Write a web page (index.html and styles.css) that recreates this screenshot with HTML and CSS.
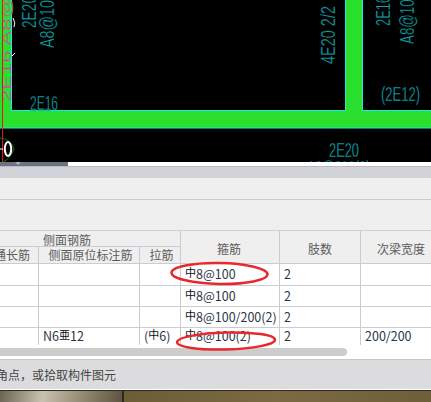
FILE: index.html
```html
<!DOCTYPE html>
<html lang="zh">
<head>
<meta charset="utf-8">
<title>梁平法表格</title>
<link rel="stylesheet" href="styles.css">
</head>
<body>
<div class="app">
  <svg class="cad" viewBox="0 0 431 162" width="431" height="162">
    <rect width="431" height="162" fill="#000"/>
    <rect x="0" y="0" width="11" height="110" fill="#2bdf2f"/>
    <rect x="345" y="0" width="18" height="110" fill="#2bdf2f"/>
    <rect x="0" y="110" width="431" height="18" fill="#2bdf2f"/>
    <path d="M11.5 0V110.5H345.5V0M362.5 0V110.5H431M0 128H431" fill="none" stroke="#1fe9e6" stroke-width="1"/>
    <text class="mag" transform="translate(10.5,102) rotate(-90)" textLength="106" lengthAdjust="spacingAndGlyphs">2E16 A8@</text>
    <path d="M13 18Q16 23 14 27M12 56L15 53" fill="none" stroke="#fff" stroke-width="1"/>
    <rect x="2" y="0" width="1" height="162" fill="#f01010"/>
    <g class="teal">
      <text transform="translate(36,28) rotate(-90)" textLength="32" lengthAdjust="spacingAndGlyphs">2E20</text>
      <text transform="translate(54,48) rotate(-90)" textLength="56" lengthAdjust="spacingAndGlyphs">A8@100</text>
      <text x="30" y="110" textLength="28" lengthAdjust="spacingAndGlyphs">2E16</text>
      <text transform="translate(335,64) rotate(-90)" textLength="58" lengthAdjust="spacingAndGlyphs">4E20 2/2</text>
      <text transform="translate(390,26) rotate(-90)" textLength="30" lengthAdjust="spacingAndGlyphs">2E16</text>
      <text transform="translate(414,44) rotate(-90)" textLength="52" lengthAdjust="spacingAndGlyphs">A8@100</text>
      <text x="381" y="101" textLength="39" lengthAdjust="spacingAndGlyphs">(2E12)</text>
      <text x="329" y="157" textLength="30" lengthAdjust="spacingAndGlyphs">2E20</text>
      <text x="307" y="175" textLength="63" lengthAdjust="spacingAndGlyphs">A8@200(2)</text>
    </g>
    <path d="M0 138Q11 139 14 149Q11 158 3 162" fill="none" stroke="#127a12" stroke-width="1"/>
    <path d="M0 149H3" stroke="#fff" stroke-width="1"/>
    <ellipse cx="8" cy="149" rx="3.2" ry="7" fill="none" stroke="#fff" stroke-width="2"/>
  </svg>

  <div class="hscroll">
    <div class="hthumb"><span class="harrow"></span></div>
  </div>
  <div class="tabbar"></div>
  <div class="toolbar"></div>
  <div class="toolbar2"></div>

  <div class="sheet">
    <div class="grid">
      <div class="hd group">侧面钢筋</div>
      <div class="hd tall c4">箍筋</div>
      <div class="hd tall c5">肢数</div>
      <div class="hd tall c6">次梁宽度</div>
      <div class="hd end">通长筋</div>
      <div class="hd low">侧面原位标注筋</div>
      <div class="hd low">拉筋</div>

      <div class="td"></div><div class="td"></div><div class="td"></div>
      <div class="td"><span class="bar">中</span>8@100</div><div class="td">2</div><div class="td"></div>

      <div class="td"></div><div class="td"></div><div class="td"></div>
      <div class="td"><span class="bar">中</span>8@100</div><div class="td">2</div><div class="td"></div>

      <div class="td"></div><div class="td"></div><div class="td"></div>
      <div class="td"><span class="bar">中</span>8@100/200(2)</div><div class="td">2</div><div class="td"></div>

      <div class="td"></div><div class="td">N6<span class="bar">亜</span>12</div><div class="td">(<span class="bar">中</span>6)</div>
      <div class="td"><span class="bar">中</span>8@100(2)</div><div class="td">2</div><div class="td">200/200</div>
    </div>
    <svg class="marks" viewBox="0 0 431 120" width="431" height="120">
      <ellipse cx="219.5" cy="42.5" rx="48" ry="10.5" transform="rotate(1 219.5 42.5)"/>
      <ellipse cx="226" cy="110" rx="49" ry="8.5" transform="rotate(-1.5 226 110)"/>
    </svg>
  </div>

  <div class="vscroll"><div class="vthumb"></div></div>
  <div class="status"><span class="status-text">角点，或拾取构件图元</span></div>
  <div class="taskbar">
    <div class="task-left"></div>
    <div class="task-right"></div>
  </div>
</div>
</body>
</html>
```

FILE: styles.css
```css
html, body {
  margin: 0;
  padding: 0;
  background: #fff;
}
.app {
  position: relative;
  width: 431px;
  height: 402px;
  overflow: hidden;
  display: flex;
  flex-direction: column;
  font-family: "Noto Sans CJK SC", "Noto Sans", sans-serif;
}
.cad {
  display: block;
  flex: none;
}
.cad text {
  font-family: "Liberation Sans", sans-serif;
}
.teal {
  fill: #0fa8ac;
  stroke: #000;
  stroke-width: 0.35;
  font-size: 21px;
}
.cad .mag {
  fill: #d934b4;
  stroke: #2bdf2f;
  stroke-width: 0.3;
  font-size: 13px;
}
.hscroll {
  height: 4px;
  flex: none;
  background: #fff;
}
.hthumb {
  width: 68px;
  height: 4px;
  background: #687480;
  display: flex;
  justify-content: center;
  padding-right: 32px;
  box-sizing: border-box;
}
.harrow {
  width: 0;
  height: 0;
  border-left: 3px solid transparent;
  border-right: 3px solid transparent;
  border-top: 3px solid #aeb4ba;
}
.tabbar {
  height: 11px;
  flex: none;
  background: #d2d3d8;
  border-top: 1px solid #b9bbc2;
}
.toolbar {
  height: 21px;
  flex: none;
  background: #efefef;
  border-bottom: 1px solid #c9c9d2;
}
.toolbar2 {
  height: 30px;
  flex: none;
  background: #efefef;
  border-bottom: 1px solid #cfcfcf;
}
.sheet {
  position: relative;
  height: 114px;
  flex: none;
}
.grid {
  display: grid;
  grid-template-columns: 84px 100px 40px 98px 80px 80px;
  grid-template-rows: 15px 16px 21px 20px 20px 17px;
  gap: 1px;
  width: 487px;
  margin-left: -46px;
  background: #cbcbd0;
  font-size: 12px;
}
.hd {
  background: #efefef;
  color: #5b5b5b;
  display: flex;
  align-items: center;
  justify-content: center;
  line-height: 1;
  white-space: nowrap;
}
.group {
  grid-column: 1 / span 3;
  grid-row: 1;
  padding-top: 2px;
}
.tall {
  grid-row: 1 / span 2;
  padding-top: 3px;
}
.low {
  padding-left: 3px;
}
.c4 {
  grid-column: 4;
  padding-right: 2px;
}
.c5 {
  grid-column: 5;
}
.c6 {
  grid-column: 6;
}
.end {
  justify-content: flex-end;
  padding-right: 8px;
}
.td {
  background: #fff;
  color: #2a3648;
  font-size: 12.5px;
  display: flex;
  align-items: center;
  padding-left: 4px;
  line-height: 1;
  white-space: nowrap;
}
.bar {
  font-size: 11px;
  margin-bottom: 4px;
  color: #111;
}
.marks {
  position: absolute;
  left: 0;
  top: 0;
  overflow: visible;
}
.marks ellipse {
  fill: none;
  stroke: #e9282e;
  stroke-width: 2.5;
}
.vscroll {
  height: 14px;
  flex: none;
  padding-top: 3px;
  box-sizing: border-box;
  background: #fff;
}
.vthumb {
  width: 347px;
  height: 8px;
  background: #cdcdcd;
  border-radius: 0 4px 4px 0;
}
.status {
  height: 29px;
  flex: none;
  background: #dcdcde;
  border-top: 1px solid #c6c6cc;
  display: flex;
  align-items: center;
  color: #444;
  font-size: 12px;
  white-space: nowrap;
}
.status-text {
  margin-left: -4px;
}
.taskbar {
  height: 12px;
  flex: none;
  display: flex;
  border-top: 1px solid #fff;
  background: #2c2a1e;
}
.task-left {
  width: 122px;
  margin-top: 1px;
  background: linear-gradient(100deg, #6a6252 0%, #c9c2b0 35%, #8f866e 70%, #5d5340 100%);
}
.task-right {
  flex: 1;
  margin-top: 1px;
  margin-left: 2px;
  background: linear-gradient(90deg, #6d5d36, #7b6a42 50%, #6f5f3a);
}
```
